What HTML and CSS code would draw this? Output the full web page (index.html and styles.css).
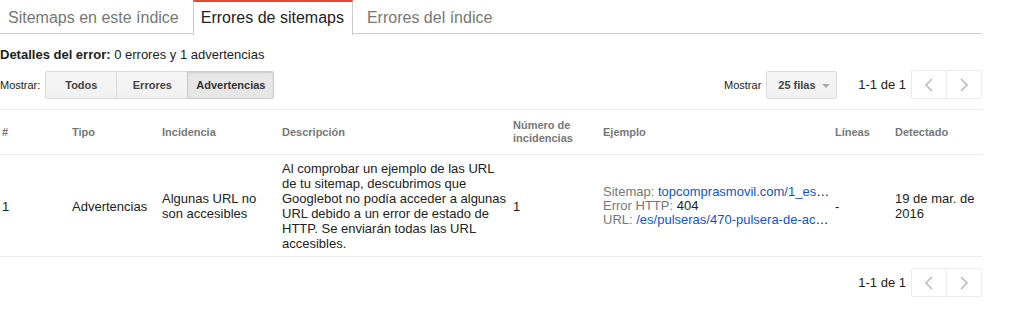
FILE: index.html
```html
<!DOCTYPE html>
<html lang="es">
<head>
    <meta charset="UTF-8">
    <meta name="viewport" content="width=device-width, initial-scale=1.0">
    <title>Errores de sitemaps</title>
    <link rel="stylesheet" href="styles.css">
</head>
<body>
    <div class="page">
        <div class="tabs">
            <span class="tab">Sitemaps en este índice</span>
            <span class="tab active">Errores de sitemaps</span>
            <span class="tab">Errores del índice</span>
        </div>

        <div class="summary"><b>Detalles del error:</b> 0 errores y 1 advertencias</div>

        <div class="toolbar">
            <div class="filter">
                <span class="label">Mostrar:</span>
                <div class="btn-group">
                    <button class="btn">Todos</button>
                    <button class="btn">Errores</button>
                    <button class="btn selected">Advertencias</button>
                </div>
            </div>
            <div class="paging">
                <span class="label">Mostrar</span>
                <button class="btn rows">25 filas <span class="caret"></span></button>
                <span class="range">1-1 de 1</span>
                <div class="pager">
                    <button class="pager-btn">
                        <svg width="10" height="14" viewBox="0 0 10 14"><polyline points="8,1 2,7 8,13" /></svg>
                    </button>
                    <button class="pager-btn">
                        <svg width="10" height="14" viewBox="0 0 10 14"><polyline points="2,1 8,7 2,13" /></svg>
                    </button>
                </div>
            </div>
        </div>

        <table class="issues">
            <colgroup>
                <col class="c-num">
                <col class="c-type">
                <col class="c-issue">
                <col class="c-desc">
                <col class="c-count">
                <col class="c-example">
                <col class="c-lines">
                <col class="c-date">
            </colgroup>
            <thead>
                <tr>
                    <th>#</th>
                    <th>Tipo</th>
                    <th>Incidencia</th>
                    <th>Descripción</th>
                    <th>Número de incidencias</th>
                    <th>Ejemplo</th>
                    <th>Líneas</th>
                    <th>Detectado</th>
                </tr>
            </thead>
            <tbody>
                <tr>
                    <td>1</td>
                    <td>Advertencias</td>
                    <td>Algunas URL no son accesibles</td>
                    <td class="desc">Al comprobar un ejemplo de las URL de tu sitemap, descubrimos que Googlebot no podía acceder a algunas URL debido a un error de estado de HTTP. Se enviarán todas las URL accesibles.</td>
                    <td>1</td>
                    <td class="example">
                        <div class="line"><span class="key">Sitemap:</span> <a href="#">topcomprasmovil.com/1_es_0_sitemap.xml</a></div>
                        <div class="line"><span class="key">Error HTTP:</span> 404</div>
                        <div class="line"><span class="key">URL:</span> <a href="#">/es/pulseras/470-pulsera-de-actividad.html</a></div>
                    </td>
                    <td>-</td>
                    <td>19 de mar. de 2016</td>
                </tr>
            </tbody>
        </table>

        <div class="footer">
            <span class="range">1-1 de 1</span>
            <div class="pager">
                <button class="pager-btn">
                    <svg width="10" height="14" viewBox="0 0 10 14"><polyline points="8,1 2,7 8,13" /></svg>
                </button>
                <button class="pager-btn">
                    <svg width="10" height="14" viewBox="0 0 10 14"><polyline points="2,1 8,7 2,13" /></svg>
                </button>
            </div>
        </div>
    </div>
</body>
</html>
```

FILE: styles.css
```css
body {
    margin: 0;
    font-family: "Liberation Sans", Arial, sans-serif;
    color: #222222;
    background: #ffffff;
}
.page {
    width: 982px;
}
.tabs {
    display: flex;
    gap: 6px;
    height: 33px;
    border-bottom: 1px solid #cccccc;
}
.tab {
    padding: 0 8px;
    font-size: 16px;
    line-height: 32px;
    height: 32px;
    color: #777777;
    border-top: 2px solid transparent;
}
.tab.active {
    color: #222222;
    background: #ffffff;
    border-top: 2px solid #dd4b39;
    border-left: 1px solid #cccccc;
    border-right: 1px solid #cccccc;
    height: 33px;
    padding: 0 8px 0 7px;
}
.summary {
    margin-top: 13px;
    font-size: 13px;
    line-height: 16px;
}
.toolbar {
    display: flex;
    justify-content: space-between;
    align-items: center;
    margin-top: 7px;
    padding-bottom: 10px;
    border-bottom: 1px solid #ebebeb;
}
.filter, .paging {
    display: flex;
    align-items: center;
}
.label {
    font-size: 11px;
    margin-right: 5px;
}
.btn-group {
    display: flex;
}
.btn {
    height: 28px;
    padding: 0 8px;
    font-family: inherit;
    font-size: 11px;
    font-weight: bold;
    color: #444444;
    white-space: nowrap;
    background: linear-gradient(#f5f5f5, #f1f1f1);
    border: 1px solid #dcdcdc;
    border-radius: 2px;
    box-sizing: border-box;
    cursor: pointer;
}
.btn-group .btn {
    min-width: 72px;
    border-radius: 0;
    margin-left: -1px;
}
.btn-group .btn:first-child {
    margin-left: 0;
    border-radius: 2px 0 0 2px;
}
.btn-group .btn:last-child {
    border-radius: 0 2px 2px 0;
}
.btn.selected {
    min-width: 87px;
    background: #e6e6e6;
    border-color: #cccccc;
    color: #333333;
    box-shadow: inset 0 1px 2px rgba(0, 0, 0, 0.1);
}
.btn.rows {
    width: 71px;
    padding: 0 8px 0 11px;
    text-align: left;
}
.caret {
    display: inline-block;
    margin-left: 3px;
    vertical-align: middle;
    border-left: 4px solid transparent;
    border-right: 4px solid transparent;
    border-top: 4px solid #aaaaaa;
}
.range {
    font-size: 13px;
    margin: 0 5px 0 21px;
}
.pager {
    display: flex;
}
.pager-btn {
    width: 36px;
    height: 29px;
    padding: 0;
    background: #ffffff;
    border: 1px solid #ebebeb;
    border-radius: 2px;
    display: flex;
    align-items: center;
    justify-content: center;
}
.pager-btn + .pager-btn {
    margin-left: -1px;
}
.pager-btn svg polyline {
    fill: none;
    stroke: #bbbbbb;
    stroke-width: 1.6;
}
.issues {
    width: 982px;
    table-layout: fixed;
    border-collapse: collapse;
}
.c-num { width: 70px; }
.c-type { width: 90px; }
.c-issue { width: 120px; }
.c-desc { width: 231px; }
.c-count { width: 90px; }
.c-example { width: 232px; }
.c-lines { width: 60px; }
.c-date { width: 89px; }
.issues th {
    height: 44px;
    padding: 0 6px 0 2px;
    font-size: 11px;
    line-height: 13px;
    font-weight: bold;
    color: #777777;
    text-align: left;
    vertical-align: middle;
    border-bottom: 1px solid #ebebeb;
}
.issues td {
    padding: 6px 6px 5px 2px;
    font-size: 13px;
    line-height: 15px;
    vertical-align: middle;
    border-bottom: 1px solid #ebebeb;
}
.issues td.desc {
    padding-right: 3px;
}
.issues td.example {
    padding-right: 3px;
}
.example .line {
    white-space: nowrap;
    overflow: hidden;
    text-overflow: ellipsis;
    line-height: 14px;
}
.example .key {
    color: #777777;
}
.example a {
    color: #1155cc;
    text-decoration: none;
}
.footer {
    display: flex;
    justify-content: flex-end;
    align-items: center;
    margin-top: 11px;
}
```
